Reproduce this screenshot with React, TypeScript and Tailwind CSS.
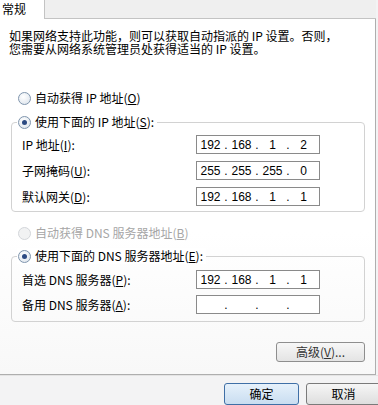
import React from "react";

const Radio = ({ checked, disabled }: { checked?: boolean; disabled?: boolean }) => (
  <span
    className={
      disabled
        ? "flex h-[13px] w-[13px] shrink-0 items-center justify-center rounded-full border border-[#d3d6da] bg-[#f1f2f3]"
        : "flex h-[13px] w-[13px] shrink-0 items-center justify-center rounded-full border border-[#7f95ad] bg-[radial-gradient(circle_at_40%_35%,#ffffff,#d9e1ea)]"
    }
  >
    {checked && <span className="h-[5px] w-[5px] rounded-full bg-[#2c4a82]" />}
  </span>
);

const IpBox = ({ parts }: { parts: string[] }) => (
  <div className="flex h-[19px] w-[124px] items-center border border-[#8a8a8a] bg-white font-['Liberation_Sans',sans-serif] text-[12px] leading-none text-black">
    {parts.map((p, i) => (
      <React.Fragment key={i}>
        {i > 0 && <span className="w-[4px] text-center">.</span>}
        <span className="w-[27px] text-center">{p}</span>
      </React.Fragment>
    ))}
  </div>
);

const Field = ({ label, parts }: { label: React.ReactNode; parts: string[] }) => (
  <div className="flex items-center">
    <span className="w-[174px]">{label}</span>
    <IpBox parts={parts} />
  </div>
);

const Legend = ({ children }: { children: React.ReactNode }) => (
  <div className="-mt-[9px] ml-[5px] flex h-[16px] w-fit items-center gap-[4px] bg-white pl-[1px] pr-[3px]">
    <Radio checked />
    <span>{children}</span>
  </div>
);

export default function App() {
  return (
    <div className="flex h-[405px] w-[378px] flex-col overflow-hidden bg-[#f3f3f4] font-['Noto_Sans_CJK_SC',sans-serif] text-[12px] leading-[12px] text-black">
      {/* tab strip */}
      <div className="flex h-[19px] w-[376px]">
        <div className="h-[19px] w-[45px] border-r border-[#c3c3c3] bg-white pl-[2px] pt-[3px]">常规</div>
        <div className="flex-1 border-b border-[#c3c3c3] bg-[#efefef]" />
      </div>

      {/* panel */}
      <div className="flex h-[357px] w-[376px] flex-col border-r border-b border-[#aeaeae] bg-[linear-gradient(#ffffff,#ffffff_60%,#f8f8f8)] pt-[10px]">
        <p className="pl-[9px] leading-[13px]">
          如果网络支持此功能，则可以获取自动指派的 IP 设置。否则，
          <br />
          您需要从网络系统管理员处获得适当的 IP 设置。
        </p>

        <div className="ml-[18px] mt-[35px] flex h-[16px] items-center gap-[4px]">
          <Radio />
          <span>
            自动获得 IP 地址(<u>O</u>)
          </span>
        </div>

        <div className="ml-[11px] mt-[16px] w-[354px] rounded-[4px] border border-[#d2d2d2] pb-[5px]">
          <Legend>
            使用下面的 IP 地址(<u>S</u>):
          </Legend>
          <div className="mt-[5px] flex flex-col gap-[7px] pl-[10px]">
            <Field label={<>IP 地址(<u>I</u>):</>} parts={["192", "168", "1", "2"]} />
            <Field label={<>子网掩码(<u>U</u>):</>} parts={["255", "255", "255", "0"]} />
            <Field label={<>默认网关(<u>D</u>):</>} parts={["192", "168", "1", "1"]} />
          </div>
        </div>

        <div className="ml-[18px] mt-[13px] flex h-[16px] items-center gap-[4px] text-[#a6a6a6]">
          <Radio disabled />
          <span>
            自动获得 DNS 服务器地址(<u>B</u>)
          </span>
        </div>

        <div className="ml-[11px] mt-[15px] w-[354px] rounded-[4px] border border-[#d2d2d2] pb-[7px]">
          <Legend>
            使用下面的 DNS 服务器地址(<u>E</u>):
          </Legend>
          <div className="mt-[6px] flex flex-col gap-[6px] pl-[10px]">
            <Field label={<>首选 DNS 服务器(<u>P</u>):</>} parts={["192", "168", "1", "1"]} />
            <Field label={<>备用 DNS 服务器(<u>A</u>):</>} parts={["", "", "", ""]} />
          </div>
        </div>

        <div className="mr-[10px] mt-[20px] flex justify-end">
          <button className="flex h-[20px] w-[89px] items-center justify-center rounded-[3px] border border-[#8e8e8e] bg-[linear-gradient(#f7f7f7,#e4e4e4)] text-[#333]">
            高级(<u>V</u>)...
          </button>
        </div>
      </div>

      {/* bottom buttons */}
      <div className="flex flex-1 gap-[7px] border-t border-[#e4e4e4] pl-[224px] pt-[7px]">
        <button className="flex h-[22px] w-[75px] shrink-0 items-center justify-center rounded-[3px] border border-[#3f6fa6] bg-[linear-gradient(#e6f1fb,#c9ddf1)]">
          确定
        </button>
        <button className="flex h-[22px] w-[75px] shrink-0 items-center justify-center rounded-[3px] border border-[#7a7a7a] bg-[linear-gradient(#f6f6f6,#dedede)]">
          取消
        </button>
      </div>
    </div>
  );
}
